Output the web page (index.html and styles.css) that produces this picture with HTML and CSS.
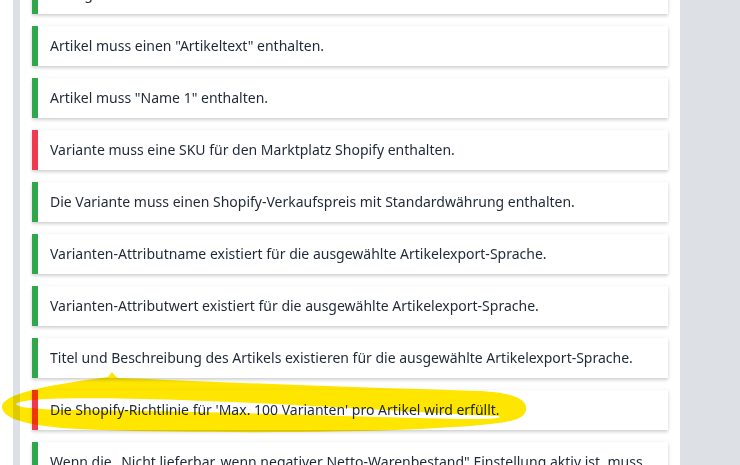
FILE: index.html
```html
<!DOCTYPE html>
<html lang="de">
<head>
    <meta charset="UTF-8">
    <meta name="viewport" content="width=device-width, initial-scale=1.0">
    <title>Prüfergebnisse Shopify</title>
    <link rel="stylesheet" href="styles.css">
</head>
<body>
    <div class="layout">
        <div class="gutter"></div>
        <div class="rail"></div>

        <main class="panel">
            <ul class="checks">
                <li class="check ok">Die Merkmale und Eigenschaften des Artikels stimmen mit der ausgewählten Shopify-<br>Konfiguration überein.</li>
                <li class="check ok">Artikel muss einen "Artikeltext" enthalten.</li>
                <li class="check ok">Artikel muss "Name 1" enthalten.</li>
                <li class="check fail">Variante muss eine SKU für den Marktplatz Shopify enthalten.</li>
                <li class="check ok">Die Variante muss einen Shopify-Verkaufspreis mit Standardwährung enthalten.</li>
                <li class="check ok">Varianten-Attributname existiert für die ausgewählte Artikelexport-Sprache.</li>
                <li class="check ok">Varianten-Attributwert existiert für die ausgewählte Artikelexport-Sprache.</li>
                <li class="check ok">Titel und Beschreibung des Artikels existieren für die ausgewählte Artikelexport-Sprache.</li>
                <li class="check fail">Die Shopify-Richtlinie für 'Max. 100 Varianten' pro Artikel wird erfüllt.</li>
                <li class="check ok">Wenn die „Nicht lieferbar, wenn negativer Netto-Warenbestand" Einstellung aktiv ist, muss<br>der Artikel einen Warenbestand haben.</li>
            </ul>
        </main>

        <div class="side"></div>
    </div>

    <!-- highlighter mark drawn over the screenshot -->
    <svg class="marker" width="740" height="465" viewBox="0 0 740 465">
        <path fill-rule="evenodd" d="M112 372 C 114 375, 116 377, 118 378 C 200 381, 330 387, 480 391 C 518 393, 530 401, 525 413 C 520 422, 500 425, 420 429 C 330 433, 200 433, 100 430 C 40 428, 5 422, 2 408 C 0 395, 40 386, 108 377 Z
                 M16 404 C 20 398, 80 397, 180 400 C 300 404, 420 413, 498 416 C 504 418, 495 419, 470 419 C 400 418, 300 414, 150 411 C 60 410, 18 410, 16 404 Z"/>
    </svg>
</body>
</html>
```

FILE: styles.css
```css
:root {
    --page-bg: #dde1e6;
    --panel-bg: #ffffff;
    --text-color: #1f2937;
    --ok: #2ea84a;
    --fail: #f0394f;
    --marker: #ffe600;
    --font-family: 'Noto Sans', 'Open Sans', sans-serif;
}

* {
    margin: 0;
    padding: 0;
    box-sizing: border-box;
}

body {
    width: 740px;
    height: 465px;
    overflow: hidden;
    position: relative;
    background: var(--page-bg);
    font-family: var(--font-family);
    color: var(--text-color);
}

.layout {
    display: grid;
    grid-template-columns: 13px 7px 660px 1fr;
    height: 465px;
}

.gutter {
    background: var(--panel-bg);
}

.rail {
    background: var(--page-bg);
}

.panel {
    background: var(--panel-bg);
    padding: 0 12px;
    overflow: hidden;
}

.checks {
    list-style: none;
    display: flex;
    flex-direction: column;
    gap: 12px;
    margin-top: -46px;
}

.check {
    background: var(--panel-bg);
    border-left: 6px solid var(--ok);
    padding: 10px 12px;
    font-size: 14px;
    line-height: 20px;
    box-shadow: 0 2px 3px rgba(0, 0, 0, 0.16), 0 0 5px rgba(0, 0, 0, 0.05);
}

.check.fail {
    border-left-color: var(--fail);
}

.marker {
    position: absolute;
    top: 0;
    left: 0;
    pointer-events: none;
    mix-blend-mode: multiply;
}

.marker path {
    fill: var(--marker);
}
```
